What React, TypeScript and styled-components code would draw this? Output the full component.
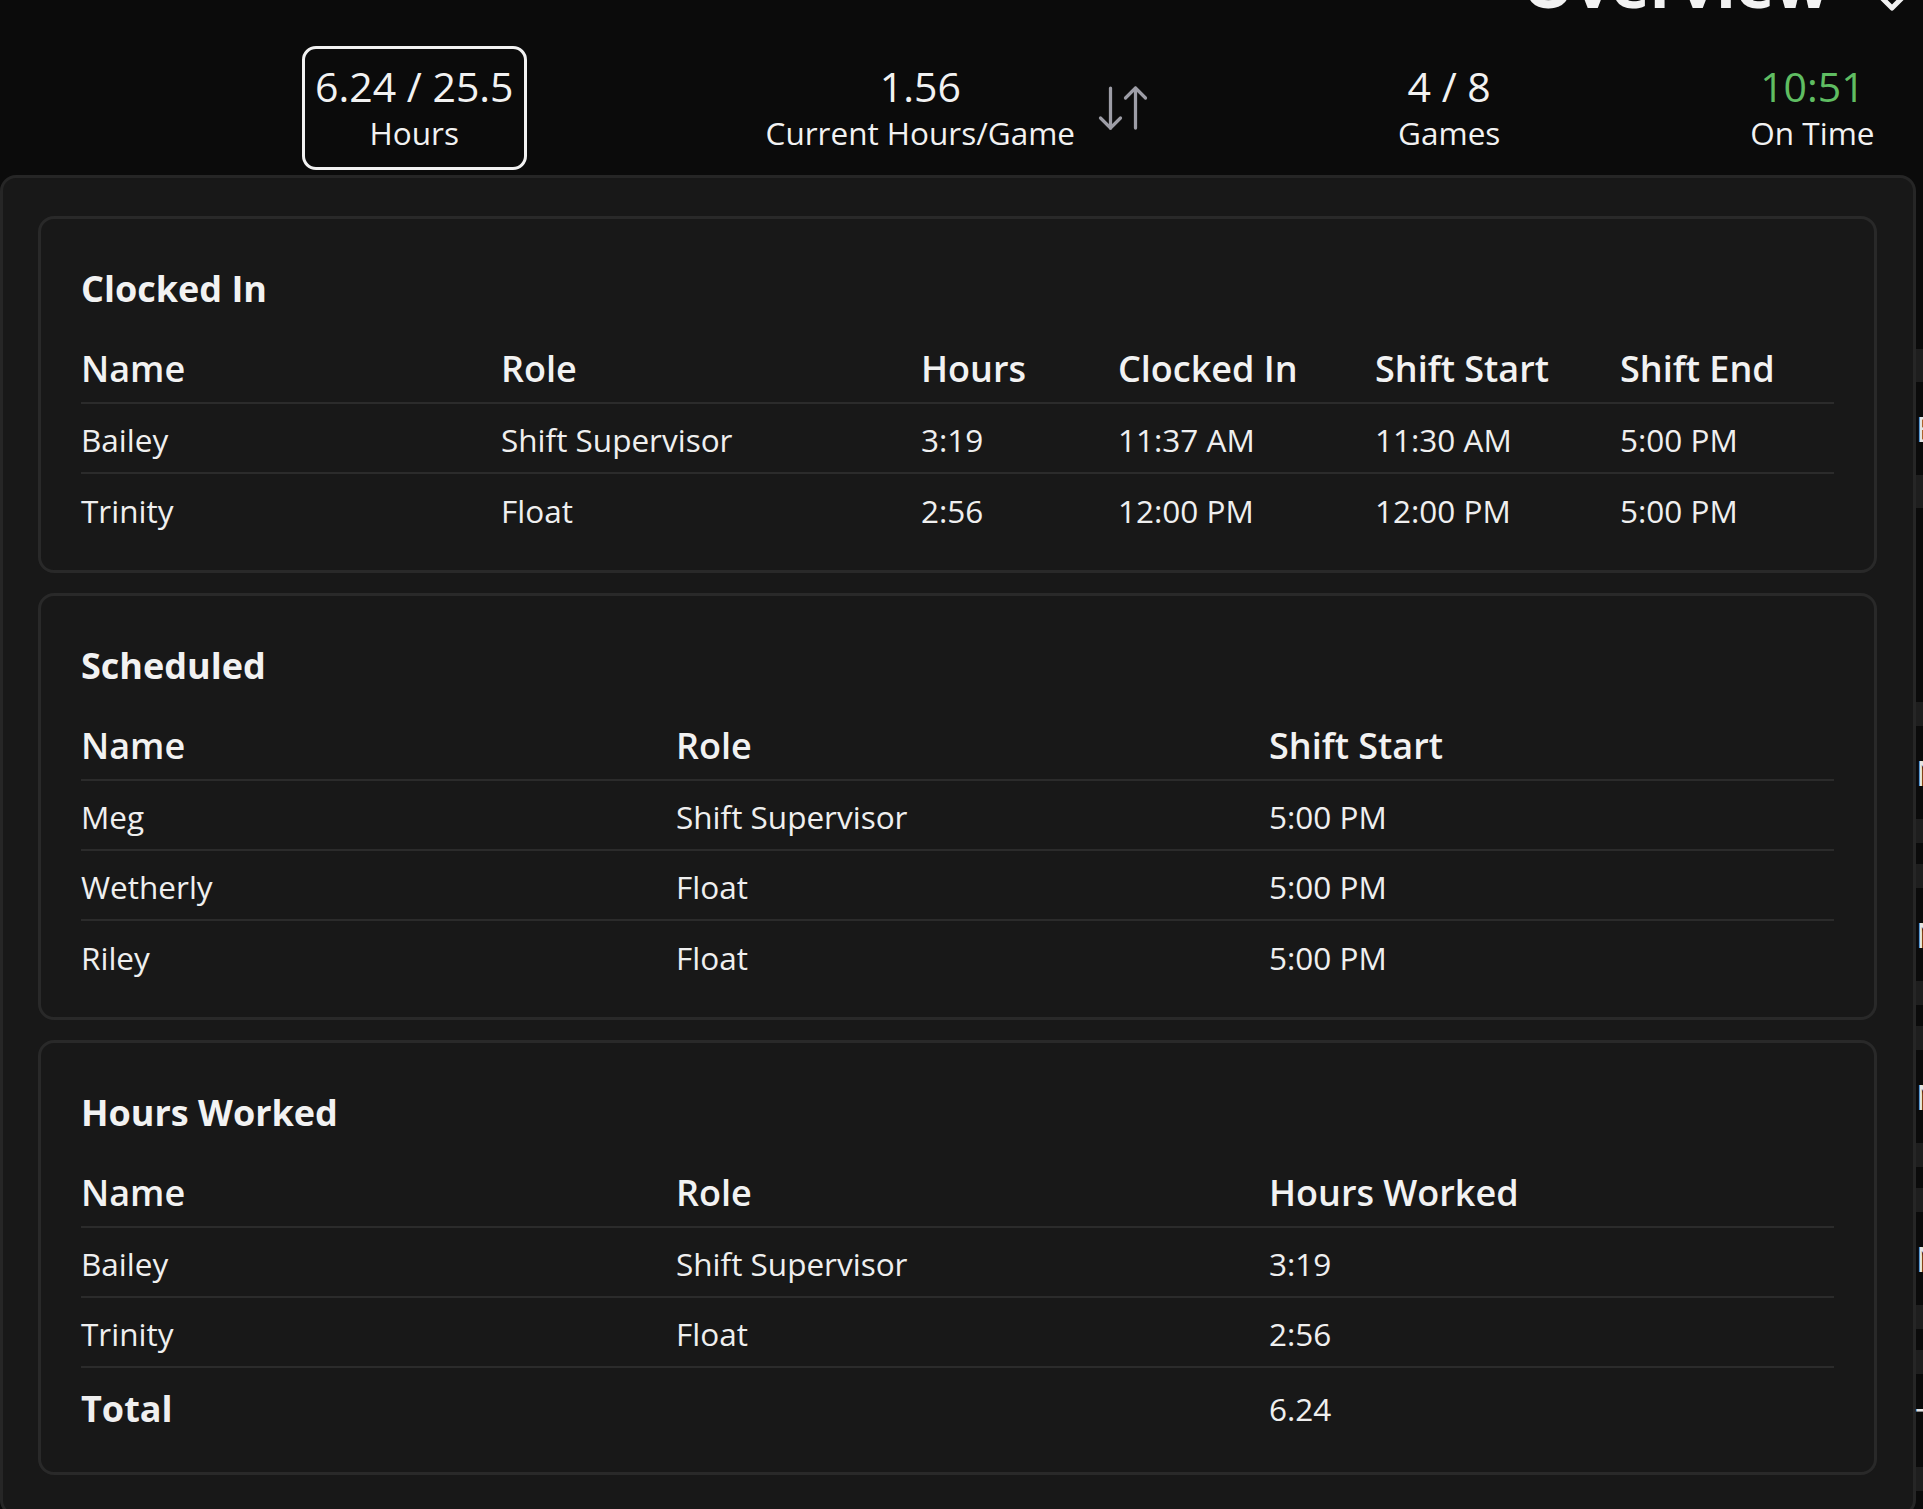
import React from 'react';
import styled, { createGlobalStyle } from 'styled-components';

const GlobalStyle = createGlobalStyle`
  html, body {
    margin: 0;
    padding: 0;
    background: #0b0b0b;
    overflow: hidden;
  }

  body {
    font-family: "Open Sans", "Noto Sans", sans-serif;
    color: #f2f2f2;
  }
`;

const Page = styled.div`
  min-height: 100vh;
  background: #0b0b0b;
`;

const TitleRow = styled.header`
  display: flex;
  justify-content: flex-end;
  align-items: flex-start;
  gap: 38px;

  height: 46px;
  padding-right: 7px;
`;

const PageTitle = styled.h1`
  margin: -49px 0 0;

  font-size: 65px;
  font-weight: 700;
  line-height: 65px;
  white-space: nowrap;
`;

const Chevron = styled.svg`
  flex-shrink: 0;
  margin-top: -22px;
`;

const StatsBar = styled.div`
  display: flex;
  align-items: center;

  padding-left: 302px;
  margin-bottom: 5px;
`;

const StatGroup = styled.div<{ $gap: number }>`
  display: flex;
  align-items: center;
  gap: 15px;

  margin-left: ${(p) => p.$gap}px;
`;

const Stat = styled.div<{ $boxed?: boolean; $gap?: number }>`
  display: flex;
  flex-direction: column;
  align-items: center;

  margin-left: ${(p) => p.$gap ?? 0}px;
  padding: 15px ${(p) => (p.$boxed ? 10 : 0)}px 13px;
  border: 3px solid ${(p) => (p.$boxed ? '#f2f2f2' : 'transparent')};
  border-radius: 14px;
`;

const StatValue = styled.div<{ $color?: string }>`
  font-size: 41px;
  line-height: 44px;
  color: ${(p) => p.$color ?? '#f2f2f2'};
  white-space: nowrap;
`;

const StatLabel = styled.div`
  margin-top: 4px;

  font-size: 31.5px;
  line-height: 42px;
  white-space: nowrap;
`;

const Main = styled.div`
  display: flex;
  align-items: flex-start;
`;

const Panel = styled.section`
  display: flex;
  flex-direction: column;
  gap: 20px;
  flex-shrink: 0;

  width: 1916px;
  padding: 38px 36px 38px 35px;

  box-sizing: border-box;
  background: #181818;
  border: 3px solid #262626;
  border-radius: 16px;
`;

const Card = styled.div`
  padding: 47px 40px 26px;

  background: #181818;
  border: 3px solid #292929;
  border-radius: 16px;
`;

const CardTitle = styled.h2`
  margin: 0 0 22px;

  font-size: 36px;
  font-weight: 700;
  line-height: 46px;
`;

const Row = styled.div<{ $columns: string; $tall?: boolean }>`
  display: grid;
  grid-template-columns: ${(p) => p.$columns};
  align-items: center;

  height: ${(p) => (p.$tall ? 78 : 70)}px;

  box-sizing: border-box;
  border-bottom: 2px solid #2b2b2b;

  &:last-child {
    border-bottom: none;
  }
`;

const HeadCell = styled.div`
  font-size: 36px;
  font-weight: 600;
  white-space: nowrap;
`;

const Cell = styled.div<{ $bold?: boolean }>`
  padding-top: 3px;

  font-size: ${(p) => (p.$bold ? 36 : 31.5)}px;
  font-weight: ${(p) => (p.$bold ? 700 : 400)};
  color: #efefef;
  white-space: nowrap;
`;

const SidePanel = styled.aside`
  display: flex;
  flex-direction: column;
  flex-shrink: 0;

  width: 400px;
  padding-top: 174px;
`;

const SideCard = styled.div<{ $band: number; $gap: number }>`
  display: flex;
  align-items: center;

  height: 93px;
  margin-top: ${(p) => p.$gap}px;

  border-top: ${(p) => p.$band}px solid #1e1e1e;
  border-bottom: ${(p) => p.$band}px solid #1e1e1e;

  font-size: 35px;
  color: #e4e4e4;
`;

type TableProps = {
  title: string;
  columns: string;
  headers: string[];
  rows: string[][];
  total?: string[];
};

const DataCard = ({ title, columns, headers, rows, total }: TableProps) => (
  <Card>
    <CardTitle>{title}</CardTitle>
    <div>
      <Row $columns={columns}>
        {headers.map((h) => (
          <HeadCell key={h}>{h}</HeadCell>
        ))}
      </Row>
      {rows.map((r, i) => (
        <Row $columns={columns} key={i}>
          {r.map((c, j) => (
            <Cell key={j}>{c}</Cell>
          ))}
        </Row>
      ))}
      {total && (
        <Row $columns={columns} $tall>
          {total.map((c, j) => (
            <Cell key={j} $bold={j === 0}>
              {c}
            </Cell>
          ))}
        </Row>
      )}
    </div>
  </Card>
);

const ArrowsIcon = () => (
  <svg
    width="60"
    height="60"
    viewBox="0 0 24 24"
    fill="none"
    stroke="#9d9da6"
    strokeWidth="1.3"
    strokeLinecap="round"
    strokeLinejoin="round"
  >
    <path d="m3 16 4 4 4-4" />
    <path d="M7 20V4" />
    <path d="m21 8-4-4-4 4" />
    <path d="M17 4v16" />
  </svg>
);

const clockedIn = [
  ['Bailey', 'Shift Supervisor', '3:19', '11:37 AM', '11:30 AM', '5:00 PM'],
  ['Trinity', 'Float', '2:56', '12:00 PM', '12:00 PM', '5:00 PM'],
];

const scheduled = [
  ['Meg', 'Shift Supervisor', '5:00 PM'],
  ['Wetherly', 'Float', '5:00 PM'],
  ['Riley', 'Float', '5:00 PM'],
];

const worked = [
  ['Bailey', 'Shift Supervisor', '3:19'],
  ['Trinity', 'Float', '2:56'],
];

const sideItems = [
  { label: 'Events', band: 33, gap: 0 },
  { label: 'Name', band: 24, gap: 194 },
  { label: 'Name', band: 24, gap: 21 },
  { label: 'Name', band: 24, gap: 21 },
  { label: 'Name', band: 24, gap: 21 },
  { label: 'Total', band: 24, gap: 21 },
];

const App = () => {
  return (
    <Page>
      <GlobalStyle />
      <TitleRow>
        <PageTitle>Overview</PageTitle>
        <Chevron
          width="48"
          height="48"
          viewBox="0 0 24 24"
          fill="none"
          stroke="#f2f2f2"
          strokeWidth="2.5"
          strokeLinecap="round"
          strokeLinejoin="round"
        >
          <path d="m6 9 6 6 6-6" />
        </Chevron>
      </TitleRow>

      <StatsBar>
        <Stat $boxed>
          <StatValue>6.24 / 25.5</StatValue>
          <StatLabel>Hours</StatLabel>
        </Stat>
        <StatGroup $gap={236}>
          <Stat>
            <StatValue>1.56</StatValue>
            <StatLabel>Current Hours/Game</StatLabel>
          </Stat>
          <ArrowsIcon />
        </StatGroup>
        <Stat $gap={242}>
          <StatValue>4 / 8</StatValue>
          <StatLabel>Games</StatLabel>
        </Stat>
        <Stat $gap={244}>
          <StatValue $color="#5fbd62">10:51</StatValue>
          <StatLabel>On Time</StatLabel>
        </Stat>
      </StatsBar>

      <Main>
        <Panel>
          <DataCard
            title="Clocked In"
            columns="420px 420px 197px 257px 245px 1fr"
            headers={['Name', 'Role', 'Hours', 'Clocked In', 'Shift Start', 'Shift End']}
            rows={clockedIn}
          />
          <DataCard
            title="Scheduled"
            columns="595px 593px 1fr"
            headers={['Name', 'Role', 'Shift Start']}
            rows={scheduled}
          />
          <DataCard
            title="Hours Worked"
            columns="595px 593px 1fr"
            headers={['Name', 'Role', 'Hours Worked']}
            rows={worked}
            total={['Total', '', '6.24']}
          />
        </Panel>
        <SidePanel>
          {sideItems.map((s, i) => (
            <SideCard key={i} $band={s.band} $gap={s.gap}>
              {s.label}
            </SideCard>
          ))}
        </SidePanel>
      </Main>
    </Page>
  );
};

export default App;
